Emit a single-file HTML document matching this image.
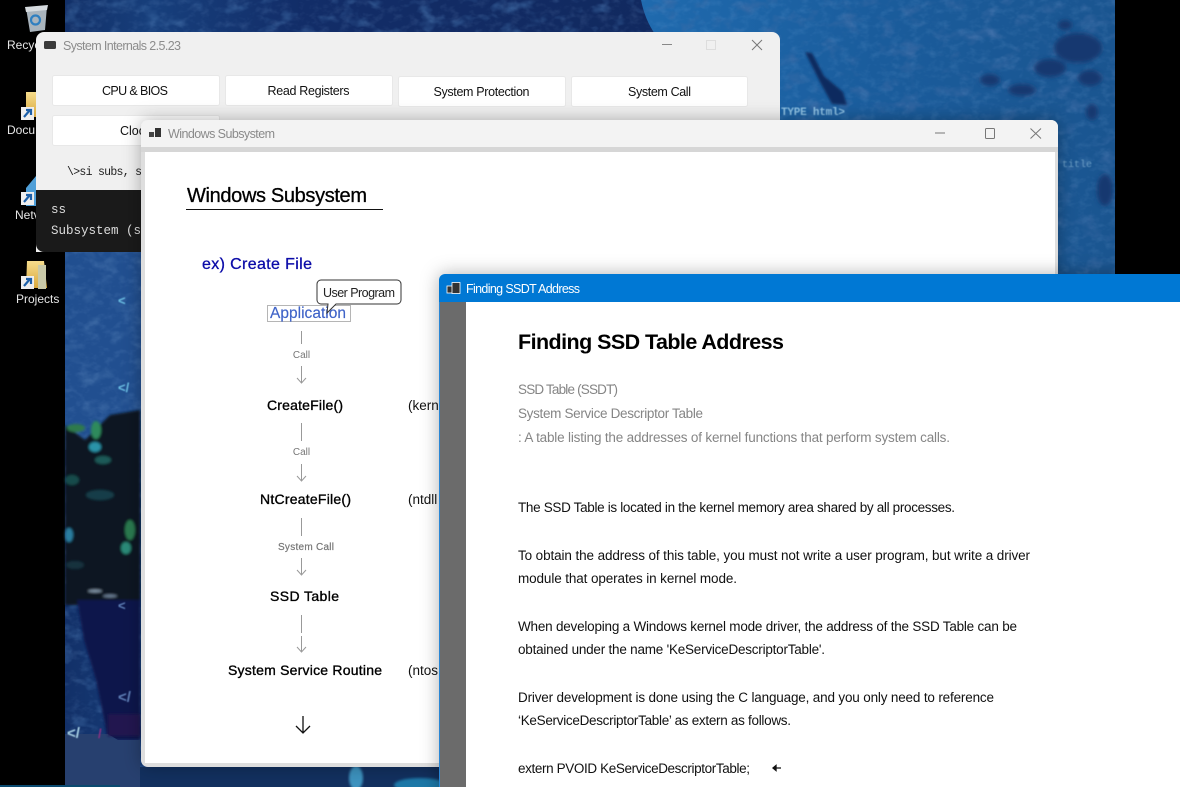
<!DOCTYPE html>
<html><head><meta charset="utf-8"><style>
html,body{margin:0;padding:0;background:#000}
svg{display:block}
text{font-family:"Liberation Sans",sans-serif}
.m{font-family:"Liberation Mono",monospace}
.b{font-size:12.5px;fill:#111;text-anchor:middle}
.g{font-size:13.5px;fill:#858585}
.k{font-size:13.5px;fill:#111}
.c{font-size:10px;fill:#777}
</style></head><body>
<svg xmlns="http://www.w3.org/2000/svg" width="1180" height="787" viewBox="0 0 1180 787">
<defs>
<filter id="tex" x="0" y="0" width="100%" height="100%"><feTurbulence type="fractalNoise" baseFrequency=".1 .14" numOctaves="3" seed="5"/><feColorMatrix values="0 0 0 0 .4  0 0 0 0 .62  0 0 0 0 .95  1.2 0 0 0 -.56"/></filter>
<filter id="tex2" x="0" y="0" width="100%" height="100%"><feTurbulence type="fractalNoise" baseFrequency=".05 .07" numOctaves="3" seed="11"/><feColorMatrix values="0 0 0 0 .05  0 0 0 0 .15  0 0 0 0 .38  1.8 0 0 0 -.95"/></filter>
<filter id="bm"><feGaussianBlur stdDeviation="2.5"/></filter>
<filter id="bs"><feGaussianBlur stdDeviation="1.2"/></filter>
<filter id="bt"><feGaussianBlur stdDeviation=".45"/></filter>
<filter id="sh" x="-10%" y="-10%" width="120%" height="120%"><feDropShadow dx="0" dy="0" stdDeviation="9" flood-color="#000" flood-opacity=".3"/></filter>
<linearGradient id="fo" x1="0" x2="0" y1="0" y2="1"><stop offset="0" stop-color="#f6dc8c"/><stop offset="1" stop-color="#d9a93e"/></linearGradient>
<linearGradient id="top" x1="0" x2="1" y1="0" y2="0"><stop offset="0" stop-color="#123068"/><stop offset=".15" stop-color="#173f7c"/><stop offset=".4" stop-color="#122d68"/><stop offset="1" stop-color="#11295f"/></linearGradient>
<linearGradient id="rt" x1="0" x2="1" y1="0" y2="0"><stop offset="0" stop-color="#1f6aae"/><stop offset=".5" stop-color="#1a5c9c"/><stop offset="1" stop-color="#1a5590"/></linearGradient>
</defs>

<rect width="1180" height="787" fill="#000"/>
<!-- wallpaper -->
<rect x="65" y="0" width="590" height="787" fill="url(#top)"/>
<path d="M641 0H1115V787H655V34Q645 20 641 0Z" fill="url(#rt)"/>
<rect x="65" y="250" width="80" height="200" fill="#214f90"/>
<rect x="65" y="0" width="1050" height="787" filter="url(#tex2)"/>
<rect x="65" y="0" width="1050" height="787" filter="url(#tex)" opacity=".22"/>
<g filter="url(#bm)" fill="#14376f">
<ellipse cx="1078" cy="48" rx="24" ry="15"/><ellipse cx="1050" cy="68" rx="16" ry="9"/><ellipse cx="1022" cy="90" rx="14" ry="6"/><ellipse cx="990" cy="80" rx="10" ry="6"/><ellipse cx="1090" cy="78" rx="12" ry="8"/>
<ellipse cx="1092" cy="112" rx="6" ry="8"/><ellipse cx="1105" cy="190" rx="8" ry="16"/><ellipse cx="1065" cy="25" rx="7" ry="5"/>
</g>
<path d="M805 52L812 53L824 76L843 92L847 105L832 104L820 82Z" fill="#0e2a5f" filter="url(#bs)"/>
<text x="781" y="115" class="m" style="font-size:11px;font-weight:700" fill="#8fc2e4" filter="url(#bt)" textLength="64">TYPE html&gt;</text>
<text x="1062" y="167" class="m" style="font-size:10px" fill="#6a9cc4" filter="url(#bt)" textLength="30">title</text>
<!-- left band: plant, pot, floor -->
<g filter="url(#bs)">
<path d="M65 425L85 440L110 415L140 410V605H65Z" fill="#071420"/>
<ellipse cx="76" cy="428" rx="9" ry="4" fill="#2e7a4c"/><ellipse cx="96" cy="430" rx="5" ry="9" fill="#2e8a5c"/><ellipse cx="95" cy="447" rx="6" ry="5" fill="#2c93a8"/>
<ellipse cx="103" cy="460" rx="8" ry="4" fill="#1d5a58"/><ellipse cx="72" cy="480" rx="7" ry="5" fill="#174b4c"/><ellipse cx="100" cy="495" rx="14" ry="5" fill="#143e4a"/>
<ellipse cx="130" cy="530" rx="5" ry="10" fill="#2a7a50"/><ellipse cx="126" cy="548" rx="5" ry="6" fill="#2c8a78"/><ellipse cx="69" cy="535" rx="4" ry="7" fill="#2a7ea0"/>
<ellipse cx="75" cy="565" rx="9" ry="4" fill="#13313e"/>
<path d="M77 600H140V740H108L96 680L84 640Z" fill="#10154c"/>
<ellipse cx="95" cy="591" rx="7" ry="1.500" fill="#7f92a4"/><ellipse cx="110" cy="596" rx="7" ry="1.500" fill="#6a7e94"/>
</g>
<path d="M65 734H108L118 740H140V787H65Z" fill="#27406f"/>
<rect x="108" y="714" width="32" height="22" fill="#22124f" filter="url(#bs)"/>
<rect x="140" y="767" width="300" height="20" fill="#12305f"/>
<ellipse cx="356" cy="778" rx="7" ry="12" fill="#3e93bf" filter="url(#bs)"/>
<ellipse cx="420" cy="785" rx="26" ry="7" fill="#1d78a8" filter="url(#bs)"/>
<g filter="url(#bt)" style="font-weight:700">
<text x="67" y="738" style="font-size:15px" fill="#a9d2e6">&lt;/</text>
<text x="118" y="702" style="font-size:15px" fill="#5f80b8">&lt;/</text>
<text x="118" y="392" style="font-size:13px" fill="#6cc0e4">&lt;/</text>
<text x="118" y="305" style="font-size:13px" fill="#6cc0e4">&lt;</text>
<text x="118" y="610" style="font-size:13px" fill="#5f80b8">&lt;</text>
<text x="98" y="738" style="font-size:13px" fill="#8b2f82">/</text>
</g>
<rect x="0" y="785" width="120" height="2" fill="#0a4a70"/>

<!-- desktop icons -->
<g>
<path d="M26 8L47 6L45 30L30 32Z" fill="#a9b4bd"/><path d="M25 7L48 5L47 10L26 12Z" fill="#d5dade"/><circle cx="35.500" cy="20" r="4.500" fill="none" stroke="#2f7fc0" stroke-width="2.200"/>
<text x="7" y="49" style="font-size:12px" fill="#e6e6e6">Recyc</text>
<rect x="26" y="92" width="10" height="25" fill="url(#fo)"/>
<rect x="21" y="107" width="13" height="13" fill="#eee"/><path d="M24 117L30 110M26 110H31V115" stroke="#1c5fa8" stroke-width="2.200" fill="none"/>
<text x="7" y="134" style="font-size:12px" fill="#e6e6e6">Docu</text>
<path d="M26 188L36 176V206H26Z" fill="#4f9fd8"/>
<rect x="21" y="192" width="13" height="13" fill="#eee"/><path d="M24 202L30 195M26 195H31V200" stroke="#1c5fa8" stroke-width="2.200" fill="none"/>
<text x="15" y="219" style="font-size:12px" fill="#e6e6e6">Netv</text>
<path d="M27 261H44L47 288H26Z" fill="url(#fo)"/><rect x="38" y="265" width="8" height="24" fill="#c9c9a8"/>
<rect x="21" y="276" width="13" height="13" fill="#eee"/><path d="M24 286L30 279M26 279H31V284" stroke="#1c5fa8" stroke-width="2.200" fill="none"/>
<text x="16" y="303" style="font-size:12px" fill="#e6e6e6">Projects</text>
</g>

<!-- System Internals -->
<path d="M36 252V40a8 8 0 0 1 8-8H772a8 8 0 0 1 8 8V252Z" fill="#f0f0f0"/>
<rect x="44" y="41" width="12" height="8" rx="1.500" fill="#3a3a3a"/>
<text x="63" y="50" style="font-size:12.500px" fill="#8c8c8c" textLength="118">System Internals 2.5.23</text>
<path d="M662 44.500H672" stroke="#888"/><rect x="706.500" y="40.500" width="9" height="9" fill="none" stroke="#ddd"/><path d="M752 40L762 50M762 40L752 50" stroke="#777"/>
<g fill="#fff" stroke="#e8e8e8">
<rect x="52.500" y="75.500" width="167" height="30" rx="2"/><rect x="225.500" y="75.500" width="167" height="30" rx="2"/><rect x="398.500" y="76.500" width="167" height="30" rx="2"/><rect x="571.500" y="76.500" width="176" height="30" rx="2"/>
<rect x="52.500" y="115.500" width="167" height="30" rx="2"/>
</g>
<text x="135" y="95" class="b" textLength="66">CPU &amp; BIOS</text><text x="308.500" y="95" class="b" textLength="82">Read Registers</text><text x="481.500" y="96" class="b" textLength="96">System Protection</text><text x="659.500" y="96" class="b" textLength="63">System Call</text>
<text x="120" y="135" style="font-size:12.500px" fill="#111">Clock</text>
<text x="67" y="175" class="m" style="font-size:11.500px" fill="#222" textLength="75">\&gt;si subs, s</text>
<path d="M36 190H780V252H44a8 8 0 0 1-8-8Z" fill="#1a1a1a"/>
<text x="51" y="213" class="m" style="font-size:12.500px" fill="#ddd">ss</text>
<text x="51" y="234" class="m" style="font-size:12.500px" fill="#ddd">Subsystem (s</text>

<!-- Windows Subsystem -->
<g filter="url(#sh)"><rect x="141" y="120" width="917" height="647" rx="7" fill="#dedede"/></g>
<path d="M141 148V127a7 7 0 0 1 7-7H1051a7 7 0 0 1 7 7V148Z" fill="#f3f3f3"/>
<rect x="141" y="147" width="917" height="5" fill="#d6d6d6"/>
<rect x="145" y="152" width="910" height="611" fill="#fff"/>
<rect x="149" y="132" width="5" height="5" fill="#444"/><rect x="155" y="128" width="6" height="9" fill="#333"/>
<text x="168" y="138" style="font-size:12.500px" fill="#8a8a8a" textLength="107">Windows Subsystem</text>
<path d="M935 133H945" stroke="#777"/><rect x="985.500" y="128.500" width="9" height="10" rx="1" fill="none" stroke="#777"/><path d="M1030.500 128.500L1041 138.500M1041 128.500L1030.500 138.500" stroke="#777"/>
<text x="187" y="202" style="font-size:20px" fill="#000" stroke="#000" stroke-width=".3" textLength="180">Windows Subsystem</text>
<rect x="186" y="209" width="197" height="1" fill="#111"/>
<text x="202" y="269" style="font-size:16px" fill="#0b0ba8" stroke="#0b0ba8" stroke-width=".3" textLength="110">ex) Create File</text>
<rect x="267.500" y="305.500" width="83" height="16" fill="#fff" stroke="#b5b5b5"/>
<text x="270" y="318" style="font-size:15.500px" fill="#3f63c8" stroke="#3f63c8" stroke-width=".15" textLength="76">Application</text>
<path d="M321 280H397a4 4 0 0 1 4 4V300a4 4 0 0 1-4 4H336L327 313L328 304H321a4 4 0 0 1-4-4V284a4 4 0 0 1 4-4Z" fill="#fff" stroke="#333"/>
<text x="323" y="297" style="font-size:12.500px" fill="#222" textLength="72">User Program</text>
<g stroke="#999" fill="none">
<path d="M301.500 331V344M301.500 366V382M297 378L301.500 383L306 378"/>
<path d="M301.500 423V441M301.500 464V480M297 476L301.500 481L306 476"/>
<path d="M301.500 518V536M301.500 558V574M297 570L301.500 575L306 570"/>
<path d="M301.500 615V633M301.500 636V651M297 647L301.500 652L306 647"/>
</g>
<path d="M303 716V733M296 726L303 733L310 726" stroke="#111" stroke-width="1.300" fill="none"/>
<text x="301.500" y="358" class="c" text-anchor="middle">Call</text><text x="301.500" y="455" class="c" text-anchor="middle">Call</text>
<text x="306" y="550" class="c" text-anchor="middle" stroke="#777" stroke-width=".2" textLength="56">System Call</text>
<g style="font-size:14px" fill="#000" stroke="#000" stroke-width=".35">
<text x="267" y="410" textLength="76">CreateFile()</text>
<text x="260" y="504" textLength="91">NtCreateFile()</text>
<text x="270" y="601" textLength="69">SSD Table</text>
<text x="228" y="675" textLength="154">System Service Routine</text>
</g>
<g style="font-size:13.500px" fill="#111"><text x="408" y="410">(kern</text><text x="408" y="504">(ntdll</text><text x="408" y="675">(ntos</text></g>

<!-- Finding SSDT -->
<g filter="url(#sh)"><path d="M439 787V280a6 6 0 0 1 6-6H1190V800H439Z" fill="#fff"/></g>
<path d="M439 302V280a6 6 0 0 1 6-6H1180V302Z" fill="#0078d4"/>
<rect x="439" y="302" width="1.500" height="485" fill="#2a86d4"/>
<rect x="440" y="302" width="26" height="485" fill="#6b6b6b"/>
<rect x="447" y="286" width="6" height="7" fill="#333" stroke="#fff" stroke-width=".8"/><rect x="452" y="282.500" width="8" height="11" fill="#333" stroke="#fff" stroke-width=".8"/>
<text x="466" y="293" style="font-size:12.500px" fill="#fff" textLength="114">Finding SSDT Address</text>
<text x="518" y="349" style="font-size:21.500px;font-weight:700" fill="#000" textLength="266">Finding SSD Table Address</text>
<text x="518" y="394" class="g" textLength="100">SSD Table (SSDT)</text>
<text x="518" y="418" class="g" textLength="185">System Service Descriptor Table</text>
<text x="518" y="442" class="g" textLength="432">: A table listing the addresses of kernel functions that perform system calls.</text>
<text x="518" y="512" class="k" textLength="437">The SSD Table is located in the kernel memory area shared by all processes.</text>
<text x="518" y="560" class="k" textLength="512">To obtain the address of this table, you must not write a user program, but write a driver</text>
<text x="518" y="583" class="k" textLength="219">module that operates in kernel mode.</text>
<text x="518" y="631" class="k" textLength="499">When developing a Windows kernel mode driver, the address of the SSD Table can be</text>
<text x="518" y="654" class="k" textLength="307">obtained under the name 'KeServiceDescriptorTable'.</text>
<text x="518" y="702" class="k" textLength="476">Driver development is done using the C language, and you only need to reference</text>
<text x="518" y="725" class="k" textLength="273">‘KeServiceDescriptorTable’ as extern as follows.</text>
<text x="518" y="773" class="k" textLength="232">extern PVOID KeServiceDescriptorTable;</text>
<path d="M773 768H781M773 768L776 765.500V770.500Z" stroke="#111" stroke-width="1.300" fill="#111"/>
</svg>
</body></html>
